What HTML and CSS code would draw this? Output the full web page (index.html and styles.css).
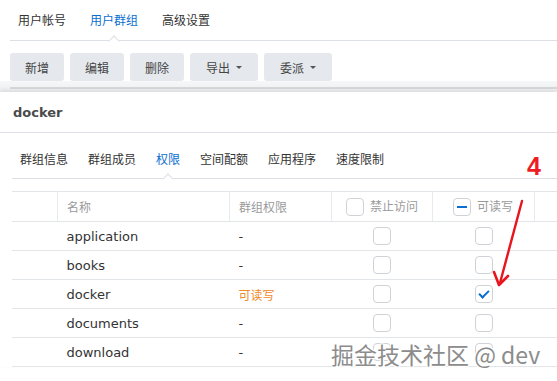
FILE: index.html
```html
<html>
    <head>
        <title>用户群组</title>
        <link rel="stylesheet" href="styles.css">
    </head>
    <body>
        <div class="page">
            <ul class="tabs top-tabs">
                <li>用户帐号</li>
                <li class="active">用户群组</li>
                <li>高级设置</li>
            </ul>
            <div class="toolbar">
                <button>新增</button>
                <button>编辑</button>
                <button>删除</button>
                <button class="dd">导出 <span class="caret"></span></button>
                <button class="dd">委派 <span class="caret"></span></button>
            </div>
            <div class="backdrop"><div class="backdrop-line"></div></div>

            <div class="dialog">
                <div class="dialog-title">docker</div>
                <ul class="tabs dialog-tabs">
                    <li>群组信息</li>
                    <li>群组成员</li>
                    <li class="active">权限</li>
                    <li>空间配额</li>
                    <li>应用程序</li>
                    <li>速度限制</li>
                </ul>

                <table class="grid">
                    <tr class="head">
                        <th class="c0"></th>
                        <th class="c1">名称</th>
                        <th class="c2">群组权限</th>
                        <th class="c3"><span class="box"></span>禁止访问</th>
                        <th class="c4"><span class="box mixed"></span>可读写</th>
                        <th class="c5"></th>
                    </tr>
                    <tr>
                        <td></td><td>application</td><td>-</td>
                        <td class="mid"><span class="box"></span></td>
                        <td class="mid"><span class="box"></span></td><td></td>
                    </tr>
                    <tr>
                        <td></td><td>books</td><td>-</td>
                        <td class="mid"><span class="box"></span></td>
                        <td class="mid"><span class="box"></span></td><td></td>
                    </tr>
                    <tr>
                        <td></td><td>docker</td><td class="rw">可读写</td>
                        <td class="mid"><span class="box"></span></td>
                        <td class="mid"><span class="box checked"></span></td><td></td>
                    </tr>
                    <tr>
                        <td></td><td>documents</td><td>-</td>
                        <td class="mid"><span class="box"></span></td>
                        <td class="mid"><span class="box"></span></td><td></td>
                    </tr>
                    <tr>
                        <td></td><td>download</td><td>-</td>
                        <td class="mid"><span class="box"></span></td>
                        <td class="mid"><span class="box"></span></td><td></td>
                    </tr>
                </table>
            </div>

            <div class="mark">4</div>
            <svg class="arrow" width="557" height="381" viewBox="0 0 557 381">
                <path d="M522 201 L500 283" stroke="#e8141e" stroke-width="2.4" fill="none" stroke-linecap="round"/>
                <path d="M494 272 L499 285 L508 276" stroke="#e8141e" stroke-width="2.6" fill="none" stroke-linecap="round" stroke-linejoin="round"/>
            </svg>
            <div class="watermark">掘金技术社区 @ dev</div>
        </div>
    </body>
</html>
```

FILE: styles.css
```css
html, body {
    padding: 0;
    margin: 0;
    background: #fff;
}
body {
    font-family: "DejaVu Sans", "Noto Sans CJK SC", sans-serif;
    color: #333;
    width: 557px;
    height: 381px;
    overflow: hidden;
}
.page {
    position: relative;
    height: 381px;
}

/* tab strips */
.tabs {
    list-style: none;
    margin: 0;
    padding: 0;
    display: flex;
    border-bottom: 1px solid #dcdfe3;
    font-size: 12px;
}
.tabs li {
    position: relative;
    line-height: 16px;
}
.tabs li.active {
    color: #0a6ed1;
}
.tabs li.active::after {
    content: "";
    position: absolute;
    left: 50%;
    bottom: -5px;
    width: 7px;
    height: 7px;
    margin-left: -4px;
    background: #fff;
    border-top: 1px solid #dcdfe3;
    border-left: 1px solid #dcdfe3;
    transform: rotate(45deg);
}
.top-tabs {
    margin-left: 10px;
    padding: 13px 0 0 8px;
    height: 27px;
    gap: 24px;
}

/* toolbar */
.toolbar {
    display: flex;
    gap: 6px;
    margin: 12px 0 0 10px;
}
.toolbar button {
    height: 28px;
    padding: 0 15px;
    border: none;
    border-radius: 3px;
    background: #e5e9ed;
    color: #444;
    font-family: inherit;
    font-size: 12px;
    display: flex;
    align-items: center;
}
.toolbar button.dd {
    padding: 0 16px;
}
.caret {
    display: inline-block;
    width: 0;
    height: 0;
    margin-left: 6px;
    border-left: 3px solid transparent;
    border-right: 3px solid transparent;
    border-top: 3px solid #555;
}
.backdrop {
    height: 5px;
    padding-top: 6px;
    background: linear-gradient(#f6f7f8, #eceeef);
}
.backdrop-line {
    margin-left: 10px;
    height: 2px;
    background: #d6d8da;
}

/* dialog */
.dialog {
    background: #fff;
    box-shadow: 0 -2px 4px rgba(0, 0, 0, 0.08);
}
.dialog-title {
    height: 40px;
    line-height: 42px;
    padding-left: 13px;
    font-size: 13px;
    font-weight: bold;
    color: #4a4a4a;
    border-bottom: 1px solid #dcdfe3;
}
.dialog-tabs {
    margin-left: 12px;
    padding: 19px 0 0 8px;
    height: 26px;
    gap: 20px;
}

/* table */
.grid {
    margin: 12px 0 0 12px;
    width: 545px;
    border-collapse: collapse;
    font-size: 13px;
}
.grid td, .grid th {
    padding: 0 0 0 9px;
    height: 29px;
    border-bottom: 1px solid #e3e6e9;
    text-align: left;
    vertical-align: middle;
}
.grid .head th {
    height: 30px;
    border-top: 1px solid #e3e6e9;
    border-right: 1px solid #e8eaec;
    font-weight: normal;
    font-size: 12px;
    color: #9a9a9a;
}
.grid .head th.c5 {
    border-right: none;
}
.c0 { width: 36px; }
.c1 { width: 162px; }
.c2 { width: 92px; }
.c3 { width: 86px; }
.c4 { width: 81px; }
.grid .head th.c3 { padding-left: 14px; }
.grid .head th.c4 { padding-left: 20px; }
.grid td.mid {
    padding: 0;
    text-align: center;
}
.grid td.rw {
    color: #f0892a;
    font-size: 12px;
}
.box {
    display: inline-block;
    width: 16px;
    height: 16px;
    border: 1px solid #cfd3d7;
    border-radius: 4px;
    background: #fff;
    vertical-align: middle;
    position: relative;
}
th .box {
    margin: -2px 6px 0 0;
}
.box.mixed::after {
    content: "";
    position: absolute;
    left: 3px;
    top: 7px;
    width: 10px;
    height: 2px;
    background: #0a6ed1;
}
.box.checked::after {
    content: "";
    position: absolute;
    left: 5px;
    top: 2px;
    width: 4px;
    height: 8px;
    border-right: 2px solid #0a6ed1;
    border-bottom: 2px solid #0a6ed1;
    transform: rotate(45deg);
}

/* annotations */
.mark {
    position: absolute;
    left: 527px;
    top: 154px;
    font-family: "Liberation Sans", sans-serif;
    font-weight: bold;
    font-size: 25px;
    line-height: 1;
    color: #ee1c25;
}
.arrow {
    position: absolute;
    left: 0;
    top: 0;
}
.watermark {
    position: absolute;
    left: 331px;
    top: 337px;
    font-family: "Noto Sans CJK SC", sans-serif;
    font-size: 23px;
    color: #8c8c8c;
    text-shadow: 1px 1px 0 #fff, -1px -1px 0 #fff, 1px -1px 0 #fff, -1px 1px 0 #fff;
    white-space: nowrap;
}
```
